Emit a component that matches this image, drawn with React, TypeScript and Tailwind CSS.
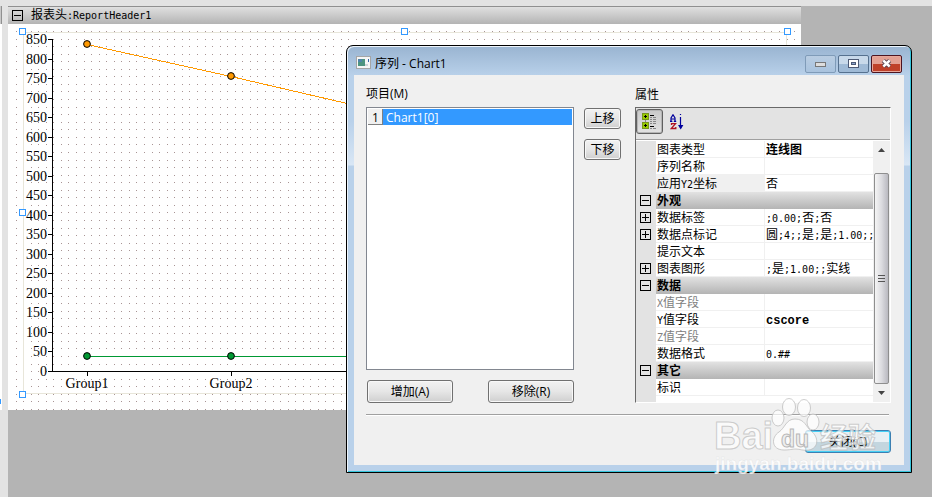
import React from 'react';

const CJK = /([\u3400-\u9fff]+)/;

/** Mixed text on a fixed pitch: a Latin character takes half the width of a Chinese one. */
function Fixed({ text, bold = false }: { text: string; bold?: boolean }) {
  return (
    <>
      {text.split(CJK).filter(Boolean).map((part, i) =>
        CJK.test(part) ? (
          <span key={i}>{part}</span>
        ) : (
          <span
            key={i}
            className={
              bold
                ? "font-['Liberation_Mono',monospace] text-[12px]"
                : "font-['DejaVu_Sans_Mono',monospace] text-[10px]"
            }
          >
            {part}
          </span>
        ),
      )}
    </>
  );
}

const STEP = 7.559;
const gridDots = (() => {
  let d = '';
  for (let r = 0; r <= 50; r++) {
    for (let c = 0; c <= 103; c++) {
      d += `M${Math.floor(16.05 + c * STEP)} ${Math.floor(31.5 + r * STEP)}h1v1h-1z`;
    }
  }
  return d;
})();

const ticks = Array.from({ length: 18 }, (_, i) => i * 50);
const tickY = (v: number) => Math.round(371 - (v / 850) * 332);
const handles = [
  [22, 31],
  [404, 31],
  [787, 31],
  [22, 212],
  [22, 394],
];

function Chart() {
  return (
    <svg className="block h-[386px] w-[793px] bg-white" viewBox="8 24 793 386" role="img" aria-label="Chart1">
      <path d={gridDots} fill="#a89494" shapeRendering="crispEdges" />
      <rect x="23.5" y="32.5" width="763" height="361" fill="none" stroke="#e8e6da" />
      <g stroke="#000" shapeRendering="crispEdges">
        <path d="M52.5 39V372M52 371.5H780M87.5 371V376M231.5 371V376" fill="none" />
        {ticks.map((v) => (
          <path key={v} d={`M48 ${tickY(v) + 0.5}h5`} />
        ))}
      </g>
      <g className="font-['Liberation_Serif',serif] text-[14px]">
        {ticks.map((v) => (
          <text key={v} x="47" y={tickY(v) + 5} textAnchor="end">
            {v}
          </text>
        ))}
        <text x="87" y="388" textAnchor="middle">Group1</text>
        <text x="231" y="388" textAnchor="middle">Group2</text>
      </g>
      <g fill="none" shapeRendering="crispEdges">
        <path d="M87 44.5L231 76.5L375 110" stroke="#ff9900" />
        <path d="M87 356.5H375" stroke="#009933" />
      </g>
      {[
        [87, 44, '#ff9900'],
        [231, 76, '#ff9900'],
        [87, 356, '#009933'],
        [231, 356, '#009933'],
      ].map(([x, y, c]) => (
        <circle key={`${x}-${y}`} cx={x} cy={y} r="3.4" fill={c as string} stroke="#000" strokeWidth="1" />
      ))}
      {handles.map(([x, y]) => (
        <rect key={`${x}-${y}`} x={x - 2.5} y={y - 2.5} width="6" height="6" fill="#fff" stroke="#3399ff" />
      ))}
    </svg>
  );
}

function Toggle({ open, label }: { open: boolean; label: string }) {
  return (
    <button type="button" aria-label={label} aria-expanded={open} className="block h-[11px] w-[11px]">
      <svg className="block" width="11" height="11" viewBox="0 0 11 11" shapeRendering="crispEdges">
        <path d={open ? 'M.5 .5h10v10h-10zM2 5.5h7' : 'M.5 .5h10v10h-10zM2 5.5h7M5.5 2v7'} fill="none" stroke="#000" />
      </svg>
    </button>
  );
}

type Row = {
  name: string;
  value?: string;
  bold?: boolean;
  category?: boolean;
  expand?: boolean;
  dim?: boolean;
  selected?: boolean;
};

const rows: Row[] = [
  { name: '图表类型', value: '连线图', bold: true },
  { name: '序列名称' },
  { name: '应用Y2坐标', value: '否', selected: true },
  { name: '外观', category: true },
  { name: '数据标签', value: ';0.00;否;否', expand: true },
  { name: '数据点标记', value: '圆;4;;是;是;1.00;;', expand: true },
  { name: '提示文本' },
  { name: '图表图形', value: ';是;1.00;;实线', expand: true },
  { name: '数据', category: true },
  { name: 'X值字段', dim: true },
  { name: 'Y值字段', value: 'cscore', bold: true },
  { name: 'Z值字段', dim: true },
  { name: '数据格式', value: '0.##' },
  { name: '其它', category: true },
  { name: '标识' },
];

function PropertyTable() {
  return (
    <table className="w-full table-fixed border-separate border-spacing-0 text-left text-[12px] leading-[18px]">
      <colgroup>
        <col className="w-[20px]" />
        <col className="w-[109px]" />
        <col />
      </colgroup>
      <tbody>
        {rows.map((r) => (
          <tr key={r.name} className="h-[17px]">
            <td className="h-[17px] bg-[#e3e3e3] p-0 pl-1">
              {(r.category || r.expand) && <Toggle open={!!r.category} label={r.name} />}
            </td>
            {r.category ? (
              <th colSpan={2} className="h-[17px] bg-linear-to-b from-[#e2e2e2] to-[#b4b4b4] p-0 pl-px font-bold">
                <div className="h-[17px] overflow-hidden">{r.name}</div>
              </th>
            ) : (
              <>
                <th
                  className={`h-[17px] border-r border-b border-[#f0f0f0] p-0 pl-px font-normal ${r.selected ? 'bg-[#f0f0f0]' : ''} ${r.dim ? 'text-[#808080]' : ''}`}
                >
                  <div className="h-[16px] overflow-hidden whitespace-nowrap">
                    <Fixed text={r.name} />
                  </div>
                </th>
                <td className={`h-[17px] border-b border-[#f0f0f0] p-0 pl-px ${r.bold ? 'font-bold' : ''}`}>
                  <div className="h-[16px] overflow-hidden whitespace-nowrap">
                    <Fixed text={r.value ?? ''} bold={r.bold} />
                  </div>
                </td>
              </>
            )}
          </tr>
        ))}
      </tbody>
    </table>
  );
}

function ScrollBar() {
  return (
    <div className="flex w-[17px] flex-col bg-[#f0f0f0] px-px">
      <button type="button" aria-label="向上滚动" className="flex h-[32px] items-center justify-center pb-[14px]">
        <svg width="7" height="4" viewBox="0 0 7 4"><path d="M0 4L3.5 0L7 4z" fill="#444" /></svg>
      </button>
      <div className="flex flex-1 items-center justify-center rounded-[2px] border border-[#8e8e8e] bg-linear-to-r from-[#f5f5f5] via-[#dcdce0] to-[#b9b9c0]">
        <svg width="7" height="8" viewBox="0 0 7 8" shapeRendering="crispEdges">
          <path d="M0 .5h7M0 3.5h7M0 6.5h7" stroke="#555" />
        </svg>
      </div>
      <button type="button" aria-label="向下滚动" className="flex h-[18px] items-center justify-center">
        <svg width="7" height="4" viewBox="0 0 7 4"><path d="M0 0L3.5 4L7 0z" fill="#444" /></svg>
      </button>
    </div>
  );
}

function Button({ children, className = '', primary = false }: { children: React.ReactNode; className?: string; primary?: boolean }) {
  return (
    <button
      type="button"
      className={`rounded-[3px] border pt-px text-center leading-[18px] ${
        primary
          ? 'border-[#3c7fb1] bg-linear-to-b from-[#e8f0f4] from-50% to-[#c3d6df] to-50% shadow-[inset_0_0_0_1px_#46d0f5]'
          : 'border-[#707070] bg-linear-to-b from-[#f2f2f2] via-[#e6e6e6] to-[#cfcfcf] shadow-[inset_0_0_0_1px_#f8f8f8]'
      } ${className}`}
    >
      {children}
    </button>
  );
}

function TitleBar() {
  const caption = 'flex h-[18px] w-[31px] items-center justify-center rounded-[2px] border';
  return (
    <header className="flex h-[28px] items-center pr-[2px] pl-[2px]">
      <svg className="mt-[2px] mr-1 block" width="15" height="13" viewBox="0 0 15 13">
        <rect x=".5" y=".5" width="14" height="12" fill="#f6f6f6" stroke="#a5a5a5" />
        <rect x="2" y="3" width="7" height="7" fill="#4d9480" />
        <path d="M2 3h4v3H2z" fill="#4e83a8" />
        <path d="M12.5 3v3" stroke="#3465a8" />
        <path d="M9 8h3v2H9z" fill="#d0d4d8" />
      </svg>
      <h1 className="flex-1 pt-[6px] leading-[18px]">序列 - Chart1</h1>
      <div className="flex gap-[2px] pt-[5px]">
        <button type="button" aria-label="最小化" className={`${caption} border-[#7f9bb8] bg-linear-to-b from-[#b9cde2] to-[#a9c3de]`}>
          <svg width="11" height="9" viewBox="0 0 11 9"><rect x=".5" y="3.5" width="10" height="4" fill="#ddd" stroke="#777" /></svg>
        </button>
        <button type="button" aria-label="最大化" className={`${caption} border-[#56718f] bg-linear-to-b from-[#c8d9ea] from-50% to-[#9fbad6] to-50%`}>
          <svg width="11" height="9" viewBox="0 0 11 9">
            <rect x=".5" y=".5" width="10" height="8" fill="#fff" stroke="#4d5a75" />
            <rect x="3.5" y="3.5" width="4" height="2" fill="#8ba3cc" stroke="#4d5a75" />
          </svg>
        </button>
        <button type="button" aria-label="关闭" className={`${caption} border-[#4d1420] bg-linear-to-b from-[#e3a093] from-50% to-[#bf412a] to-50% shadow-[inset_0_0_0_1px_#e8a89b]`}>
          <svg width="13" height="11" viewBox="0 0 13 11">
            <path d="M3.3 2.5L9.7 8.5M9.7 2.5L3.3 8.5" stroke="#53404f" strokeWidth="4.4" />
            <path d="M3.3 2.5L9.7 8.5M9.7 2.5L3.3 8.5" stroke="#fff" strokeWidth="2.4" />
          </svg>
        </button>
      </div>
    </header>
  );
}

function Toolbar() {
  return (
    <div className="flex h-[32px] items-start gap-1 border-b border-[#a0a0a0] bg-[#e3e3e3] pt-[1px]">
      <button
        type="button"
        aria-label="按分类排序"
        className="flex h-[25px] w-[27px] items-center justify-center rounded-[3px] border border-[#606060] bg-linear-to-b from-[#c9c9c9] to-[#e2e2e2] shadow-[inset_0_0_0_1px_#b5b5b5]"
      >
        <svg width="15" height="17" viewBox="0 0 15 17" shapeRendering="crispEdges">
          <path d="M3.5 6v4" stroke="#888" />
          <path d="M.5 .5h6v6h-6zM.5 9.5h6v6h-6z" fill="#9c0" stroke="#78951c" />
          <path d="M2 3.5h3M3.5 2v3M2 12.5h3M3.5 11v3" stroke="#000" />
          <path d="M8 2.5h4M8 13.5h4" stroke="#000" />
          <path d="M8 4.5h2M11 4.5h3M8 6.5h2M11 6.5h3M8 8.5h2M11 8.5h3M8 10.5h2M11 10.5h3M8 15.5h2M11 15.5h3" stroke="#888" />
        </svg>
      </button>
      <button type="button" aria-label="按字母排序" className="flex h-[25px] w-[20px] items-center justify-center">
        <svg width="14" height="16" viewBox="0 0 14 16">
          <path d="M1 7V4L3 .8L5 4V7M0 7.3h2.4M3.8 7.3h2.4M1 5h4" fill="none" stroke="#00009c" strokeWidth="1.2" />
          <path d="M1.5 11V9.6h4L1.2 14.5h4.6V13" fill="none" stroke="#b01020" strokeWidth="1.3" />
          <path d="M10.5 0v1M10.5 3v11" stroke="#00009c" strokeWidth="1.2" />
          <path d="M8 11h5.4L10.7 15.6z" fill="#00009c" />
        </svg>
      </button>
    </div>
  );
}

function Watermark() {
  return (
    <svg
      aria-hidden="true"
      className="pointer-events-none absolute top-[395px] left-[710px] h-[86px] w-[176px] font-['Liberation_Sans','Noto_Sans_CJK_SC',sans-serif] font-bold"
      viewBox="0 0 176 86"
    >
      <g fill="#fff" fillOpacity=".7" stroke="#b8b8b8" strokeOpacity=".7" strokeWidth="1">
        <text x="4" y="54" fontSize="38">Bai</text>
        <ellipse cx="79" cy="12" rx="6.5" ry="8.5" />
        <ellipse cx="94" cy="13" rx="6.5" ry="8.5" />
        <ellipse cx="68" cy="23" rx="6" ry="8" />
        <ellipse cx="103" cy="27" rx="6" ry="8" />
        <path d="M85 24C76 24 75 33 69 37C61 42 61 55 74 55C80 55 82 54 86 54C90 54 93 56 99 55C109 53 109 42 101 36C96 32 95 24 85 24Z" />
        <text x="110" y="53" fontSize="28">经验</text>
      </g>
      <text x="85" y="52" fontSize="23" textAnchor="middle" fill="#eee" stroke="#b8b8b8">du</text>
      <text x="5" y="75" fontSize="19" fill="#fff" fillOpacity=".85" stroke="#c4c8cc" strokeOpacity=".4" strokeWidth=".4">jingyan.baidu.com</text>
    </svg>
  );
}

function SeriesDialog() {
  return (
    <section
      role="dialog"
      aria-label="序列 - Chart1"
      className="absolute top-[45px] left-[346px] w-[566px] rounded-t-[7px] border border-black bg-[#b9d1ea] bg-[linear-gradient(to_bottom,#99b4d1_0px,#b9d1ea_30px,#b9d1ea_75px,#d9e7f5_119px,#b9d1ea_120px)] px-[7px] pt-[1px] pb-[7px] font-['Open_Sans','Noto_Sans_CJK_SC',sans-serif] text-[12px] shadow-[inset_1px_1px_0_0_#eef5fb,inset_-1px_-1px_0_0_#35c5dc]"
    >
      <TitleBar />
      <div className="bg-[#f0f0f0] pt-[10px] pr-[13px] pb-[12px] pl-[12px]">
        <div className="flex">
          <div className="flex w-[208px] flex-col">
            <h2 id="members" className="mb-1 leading-[18px]">项目(M)</h2>
            <ul aria-labelledby="members" className="flex-1 border border-[#828790] bg-white p-[1px]">
              <li>
                <button type="button" className="flex h-[16px] w-full bg-[#3399ff] text-left leading-[18px] text-white">
                  <span className="h-[16px] w-[15px] border-r border-b border-[#808080] bg-[#f0f0f0] pl-1 text-black">1</span>
                  <span className="pl-[3px]">Chart1[0]</span>
                </button>
              </li>
            </ul>
            <div className="mt-[10px] flex justify-between pl-[1px]">
              <Button className="h-[23px] w-[86px]">增加(A)</Button>
              <Button className="h-[23px] w-[86px]">移除(R)</Button>
            </div>
          </div>
          <div className="mt-[23px] mr-[14px] ml-[10px] flex w-[37px] flex-col gap-[10px]">
            <Button className="h-[21px]">上移</Button>
            <Button className="h-[21px]">下移</Button>
          </div>
          <div className="flex-1">
            <h2 className="pt-px mb-[3px] leading-[18px]">属性</h2>
            <div className="border border-t-[#696969] border-r-white border-b-white border-l-[#696969] bg-white">
              <Toolbar />
              <div className="flex h-[262px] pt-[1px]">
                <div className="min-w-0 flex-1 bg-[linear-gradient(to_right,#e3e3e3_20px,#fff_20px)]">
                  <PropertyTable />
                </div>
                <ScrollBar />
              </div>
            </div>
          </div>
        </div>
        <hr className="mt-[11px] mr-[2px] mb-[14px] h-[2px] border-t border-b border-t-[#a0a0a0] border-b-white" />
        <div className="flex justify-end">
          <Button primary className="h-[23px] w-[86px]">关闭(C)</Button>
        </div>
      </div>
    </section>
  );
}

export default function App() {
  return (
    <main className="relative min-h-screen overflow-hidden bg-[#b4b4b4] font-['Liberation_Sans','Noto_Sans_CJK_SC',sans-serif] text-[12px] text-black">
      <div className="h-[6px] bg-[#e3e3e3]" />
      <div className="flex min-h-[491px]">
        <div className="w-[8px] shrink-0 bg-[#e3e3e3]">
          <div className="h-[18px] w-[2px] border-r border-[#909090] bg-[#c8c8c8]" />
          <div className="flex h-[386px] w-[2px] items-end bg-white pb-[6px]">
            <div className="h-[5px] w-px bg-[#3399ff]" />
          </div>
        </div>
        <section className="w-[793px]">
          <header className="flex h-[18px] items-center border-t border-[#909090] bg-linear-to-b from-[#e0e0e0] to-[#b4b4b4] pl-1">
            <Toggle open label="报表头" />
            <h1 className="pl-2 leading-[18px]">
              <Fixed text="报表头:ReportHeader1" />
            </h1>
          </header>
          <Chart />
        </section>
      </div>
      <SeriesDialog />
      <Watermark />
    </main>
  );
}
